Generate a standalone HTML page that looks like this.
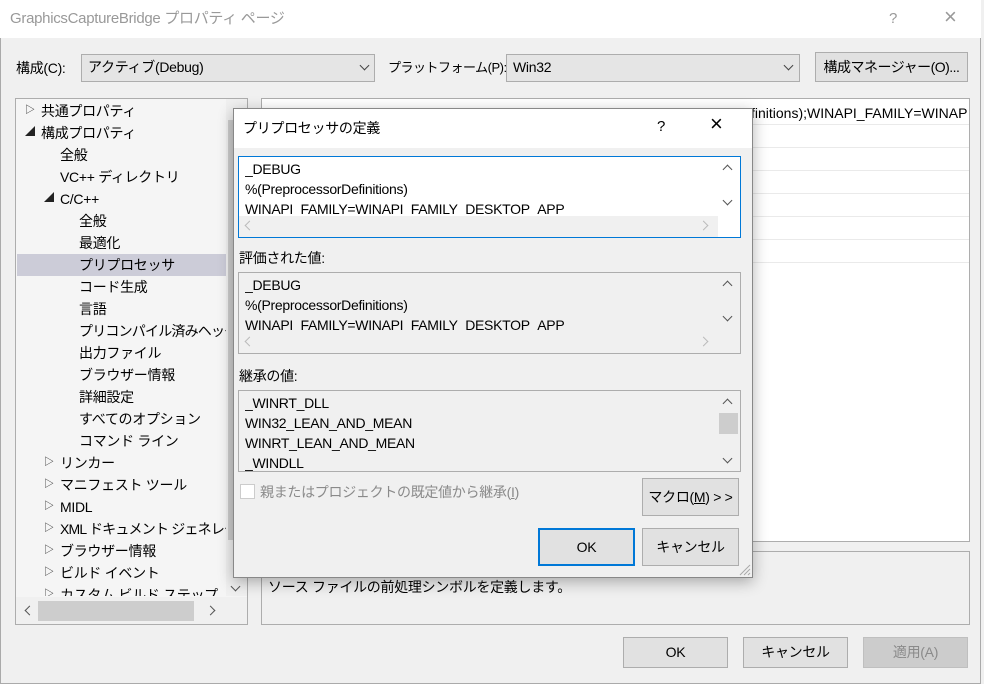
<!DOCTYPE html>
<html><head><meta charset="utf-8">
<style>
*{box-sizing:border-box;margin:0;padding:0}
body{width:984px;height:684px;overflow:hidden;background:#f0f0f0;font-family:"Liberation Sans","Noto Sans CJK JP",sans-serif;font-size:14px;color:#000;position:relative;letter-spacing:-0.3px}
.a{position:absolute;white-space:nowrap;line-height:20px}
.btn{position:absolute;background:#e1e1e1;border:1px solid #adadad;text-align:center;line-height:28px}
.box{position:absolute;border:1px solid #adadad}
.combo{position:absolute;background:#e5e5e5;border:1px solid #adadad;line-height:25px;padding-left:6px}
.chev{position:absolute;width:7px;height:7px;border-right:1px solid #444;border-bottom:1px solid #444;transform:rotate(45deg)}
.chu{position:absolute;width:7px;height:7px;border-left:1.5px solid #555;border-top:1.5px solid #555;transform:rotate(45deg)}
.chd{position:absolute;width:7px;height:7px;border-right:1.5px solid #555;border-bottom:1.5px solid #555;transform:rotate(45deg)}
.chl{position:absolute;width:7px;height:7px;border-left:1.5px solid #bbb;border-bottom:1.5px solid #bbb;transform:rotate(45deg)}
.chr{position:absolute;width:7px;height:7px;border-right:1.5px solid #bbb;border-top:1.5px solid #bbb;transform:rotate(45deg)}
.tri{position:absolute;font-size:10px;line-height:22px;color:#222}
</style></head><body>
<div style="position:absolute;left:0;top:0;width:981px;height:684px;border:1px solid #aaa;border-top:none"></div>
<div style="position:absolute;left:0;top:0;width:981px;height:38px;background:#fff"></div>
<div class="a" style="left:10px;top:9px;color:#999;font-size:15px">GraphicsCaptureBridge プロパティ ページ</div>
<div class="a" style="left:889px;top:9px;color:#999;font-size:15px">?</div>
<div class="a" style="left:944px;top:7px;color:#999;font-size:22px;font-weight:100">×</div>

<div class="a" style="left:16px;top:58px">構成(C):</div>
<div class="combo" style="left:81px;top:54px;width:294px;height:28px">アクティブ(Debug)</div>
<div class="chev" style="left:361px;top:62px"></div>
<div class="a" style="left:388px;top:58px;font-size:13px;letter-spacing:-0.5px">プラットフォーム(P):</div>
<div class="combo" style="left:506px;top:54px;width:294px;height:28px">Win32</div>
<div class="chev" style="left:785px;top:62px"></div>
<div class="btn" style="left:815px;top:52px;width:153px;height:30px;letter-spacing:-0.5px">構成マネージャー(O)...</div>

<!-- tree -->
<div class="box" style="left:15px;top:98px;width:233px;height:527px;background:#f5f5f5"></div>
<div style="position:absolute;left:17px;top:254px;width:209px;height:22px;background:#ccccd8"></div>
<div style="position:absolute;left:226px;top:99px;width:21px;height:497px;background:#f0f0f0"></div>
<div style="position:absolute;left:228px;top:120px;width:17px;height:420px;background:#cdcdcd"></div>
<div class="chd" style="left:232px;top:583px"></div>
<div style="position:absolute;left:16px;top:597px;width:231px;height:27px;background:#f0f0f0"></div>
<div style="position:absolute;left:38px;top:601px;width:156px;height:20px;background:#cdcdcd"></div>
<div class="chl" style="left:26px;top:607px;border-color:#555"></div>
<div class="chr" style="left:207px;top:607px;border-color:#555"></div>
<div style="position:absolute;left:0;top:100px;width:226px;height:496px;overflow:hidden">
<div class="tri" style="left:25px;top:0">▷</div><div class="a" style="left:41px;top:1px">共通プロパティ</div>
<div class="tri" style="left:25px;top:22px">◢</div><div class="a" style="left:41px;top:23px">構成プロパティ</div>
<div class="a" style="left:60px;top:45px">全般</div>
<div class="a" style="left:60px;top:67px">VC++ ディレクトリ</div>
<div class="tri" style="left:44px;top:88px">◢</div><div class="a" style="left:60px;top:89px">C/C++</div>
<div class="a" style="left:79px;top:111px">全般</div>
<div class="a" style="left:79px;top:133px">最適化</div>
<div class="a" style="left:79px;top:155px">プリプロセッサ</div>
<div class="a" style="left:79px;top:177px">コード生成</div>
<div class="a" style="left:79px;top:199px">言語</div>
<div class="a" style="left:79px;top:221px;letter-spacing:-0.8px">プリコンパイル済みヘッダー</div>
<div class="a" style="left:79px;top:243px">出力ファイル</div>
<div class="a" style="left:79px;top:265px">ブラウザー情報</div>
<div class="a" style="left:79px;top:287px">詳細設定</div>
<div class="a" style="left:79px;top:309px">すべてのオプション</div>
<div class="a" style="left:79px;top:331px">コマンド ライン</div>
<div class="tri" style="left:44px;top:352px">▷</div><div class="a" style="left:60px;top:353px">リンカー</div>
<div class="tri" style="left:44px;top:374px">▷</div><div class="a" style="left:60px;top:375px">マニフェスト ツール</div>
<div class="tri" style="left:44px;top:396px">▷</div><div class="a" style="left:60px;top:397px">MIDL</div>
<div class="tri" style="left:44px;top:418px">▷</div><div class="a" style="left:60px;top:419px;letter-spacing:-0.8px">XML ドキュメント ジェネレータ</div>
<div class="tri" style="left:44px;top:440px">▷</div><div class="a" style="left:60px;top:441px">ブラウザー情報</div>
<div class="tri" style="left:44px;top:462px">▷</div><div class="a" style="left:60px;top:463px">ビルド イベント</div>
<div class="tri" style="left:44px;top:484px">▷</div><div class="a" style="left:60px;top:485px">カスタム ビルド ステップ</div>
</div>

<!-- right grid -->
<div class="box" style="left:261px;top:98px;width:709px;height:444px;background:#fff"></div>
<div style="position:absolute;left:262px;top:124px;width:707px;height:1px;background:#eaeaea"></div>
<div style="position:absolute;left:262px;top:147px;width:707px;height:1px;background:#eaeaea"></div>
<div style="position:absolute;left:262px;top:170px;width:707px;height:1px;background:#eaeaea"></div>
<div style="position:absolute;left:262px;top:193px;width:707px;height:1px;background:#eaeaea"></div>
<div style="position:absolute;left:262px;top:216px;width:707px;height:1px;background:#eaeaea"></div>
<div style="position:absolute;left:262px;top:239px;width:707px;height:1px;background:#eaeaea"></div>
<div style="position:absolute;left:262px;top:262px;width:707px;height:1px;background:#eaeaea"></div>
<div class="a" style="left:751px;top:103px;letter-spacing:0px">finitions);WINAPI_FAMILY=WINAP</div>
<div class="box" style="left:261px;top:551px;width:709px;height:74px"></div>
<div class="a" style="left:268px;top:577px">ソース ファイルの前処理シンボルを定義します。</div>

<div class="btn" style="left:623px;top:637px;width:105px;height:31px">OK</div>
<div class="btn" style="left:743px;top:637px;width:105px;height:31px">キャンセル</div>
<div class="btn" style="left:863px;top:637px;width:105px;height:31px;background:#cccccc;border-color:#bfbfbf;color:#8a8a8a">適用(A)</div>

<!-- dialog -->
<div style="position:absolute;left:233px;top:108px;width:520px;height:470px;background:#f0f0f0;border:1px solid #888;box-shadow:0 4px 14px rgba(0,0,0,0.3)"></div>
<div style="position:absolute;left:234px;top:109px;width:518px;height:39px;background:#fff"></div>
<div class="a" style="left:243px;top:118px">プリプロセッサの定義</div>
<div class="a" style="left:657px;top:117px;font-size:15px">?</div>
<div class="a" style="left:710px;top:114px;font-size:22px;font-weight:100">×</div>

<div style="position:absolute;left:238px;top:156px;width:503px;height:82px;background:#fff;border:1px solid #0078d7"></div>
<div style="position:absolute;left:239px;top:216px;width:479px;height:21px;background:#f0f0f0"></div>
<div class="chu" style="left:724px;top:166px"></div><div class="chd" style="left:724px;top:197px"></div>
<div class="chl" style="left:246px;top:222px"></div><div class="chr" style="left:700px;top:222px"></div>
<div style="position:absolute;left:245px;top:159px;width:470px;height:57px;overflow:hidden">
<div class="a" style="left:0;top:0">_DEBUG</div><div class="a" style="left:0;top:20px">%(PreprocessorDefinitions)</div><div class="a" style="left:0;top:40px">WINAPI_FAMILY=WINAPI_FAMILY_DESKTOP_APP</div></div>

<div class="a" style="left:239px;top:248px">評価された値:</div>
<div class="box" style="left:238px;top:272px;width:503px;height:82px"></div>
<div class="chu" style="left:724px;top:282px"></div><div class="chd" style="left:724px;top:313px"></div>
<div class="chl" style="left:246px;top:338px"></div><div class="chr" style="left:700px;top:338px"></div>
<div style="position:absolute;left:245px;top:275px;width:470px;height:57px;overflow:hidden">
<div class="a" style="left:0;top:0">_DEBUG</div><div class="a" style="left:0;top:20px">%(PreprocessorDefinitions)</div><div class="a" style="left:0;top:40px">WINAPI_FAMILY=WINAPI_FAMILY_DESKTOP_APP</div></div>

<div class="a" style="left:239px;top:366px">継承の値:</div>
<div class="box" style="left:238px;top:390px;width:503px;height:82px"></div>
<div style="position:absolute;left:719px;top:413px;width:19px;height:21px;background:#cdcdcd"></div>
<div class="chu" style="left:724px;top:400px"></div><div class="chd" style="left:724px;top:455px"></div>
<div style="position:absolute;left:245px;top:393px;width:470px;height:78px;overflow:hidden">
<div class="a" style="left:0;top:0">_WINRT_DLL</div><div class="a" style="left:0;top:20px">WIN32_LEAN_AND_MEAN</div><div class="a" style="left:0;top:40px">WINRT_LEAN_AND_MEAN</div><div class="a" style="left:0;top:60px">_WINDLL</div></div>

<div style="position:absolute;left:240px;top:484px;width:15px;height:15px;background:#fff;border:1px solid #ccc"></div>
<div class="a" style="left:260px;top:482px;color:#8a8a8a">親またはプロジェクトの既定値から継承(<u>I</u>)</div>
<div class="btn" style="left:642px;top:478px;width:97px;height:38px;line-height:36px">マクロ(<u>M</u>) &gt; &gt;</div>
<div class="btn" style="left:538px;top:528px;width:97px;height:38px;line-height:34px;border:2px solid #0078d7">OK</div>
<div class="btn" style="left:642px;top:528px;width:97px;height:38px;line-height:36px">キャンセル</div>
<svg style="position:absolute;left:738px;top:563px" width="13" height="13"><path d="M12 2L2 12M12 6L6 12M12 10L10 12" stroke="#aaa" stroke-width="1"/></svg>
</body></html>
